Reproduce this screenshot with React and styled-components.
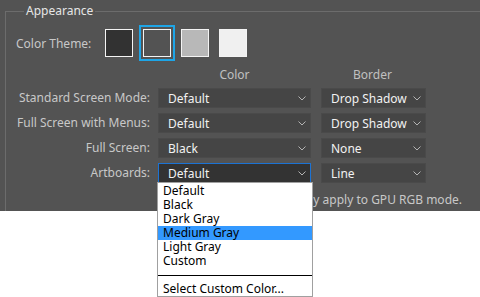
import styled, { createGlobalStyle } from 'styled-components';

const GlobalStyle = createGlobalStyle`
  html, body {
    margin: 0;
    padding: 0;
    background: #ffffff;
  }
  body {
    font-family: 'Noto Sans', 'Open Sans', sans-serif;
    font-size: 12px;
  }
`;

const THEMES = ['#323232', '#535353', '#b8b8b8', '#f0f0f0'];

const ROWS = [
  { label: 'Standard Screen Mode:', color: 'Default', border: 'Drop Shadow' },
  { label: 'Full Screen with Menus:', color: 'Default', border: 'Drop Shadow' },
  { label: 'Full Screen:', color: 'Black', border: 'None' },
  { label: 'Artboards:', color: 'Default', border: 'Line', open: true },
];

const OPTIONS = ['Default', 'Black', 'Dark Gray', 'Medium Gray', 'Light Gray', 'Custom'];

function Chevron() {
  return (
    <ChevronSvg width="8" height="5" viewBox="0 0 8 5">
      <polyline points="0.5,0.5 4,4 7.5,0.5" fill="none" stroke="#b4b4b4" strokeWidth="1" />
    </ChevronSvg>
  );
}

function Select({ value, width, active, children }) {
  return (
    <SelectBox $width={width} $active={active}>
      <SelectValue>{value}</SelectValue>
      <Chevron />
      {children}
    </SelectBox>
  );
}

export default function App() {
  return (
    <Page>
      <GlobalStyle />
      <Panel>
        <Group>
          <Legend>Appearance</Legend>

          <ThemeRow>
            <ThemeLabel>Color Theme:</ThemeLabel>
            <Swatches>
              {THEMES.map((c, i) => (
                <Swatch key={c} $color={c} $selected={i === 1} />
              ))}
            </Swatches>
          </ThemeRow>

          <ModeGrid>
            <span />
            <ColHead>Color</ColHead>
            <ColHead>Border</ColHead>
            {ROWS.map((row) => (
              <Row key={row.label} row={row} />
            ))}
          </ModeGrid>

          {/* left part of the note sits under the open menu */}
          <Note>
            <span>Note: Border settings only apply to GPU RGB mode.</span>
          </Note>
        </Group>
      </Panel>
    </Page>
  );
}

function Row({ row }) {
  return (
    <>
      <RowLabel>{row.label}</RowLabel>
      <Select value={row.color} width={153} active={row.open}>
        {row.open && (
          <Menu>
            {OPTIONS.map((o) => (
              <MenuItem key={o} $hl={o === 'Medium Gray'}>{o}</MenuItem>
            ))}
            <MenuRule />
            <MenuItem>Select Custom Color...</MenuItem>
          </Menu>
        )}
      </Select>
      <Select value={row.border} width={105} />
    </>
  );
}

const Page = styled.div`
  height: 297px;
  overflow: hidden;
  background: #ffffff;
`;

const Panel = styled.div`
  height: 211px;
  background: #535353;
  padding: 11px 0 0 5px;
  box-sizing: border-box;
`;

const Group = styled.div`
  height: 200px;
  box-sizing: border-box;
  border-top: 1px solid #6c6c6c;
  border-left: 1px solid #6c6c6c;
  padding-left: 10px;
`;

const Legend = styled.div`
  width: fit-content;
  margin: -9px 0 0 8px;
  padding: 0 2px;
  height: 16px;
  line-height: 16px;
  color: #e6e6e6;
  background: #535353;
`;

const ThemeRow = styled.div`
  display: flex;
  align-items: center;
  margin-top: 10px;
  height: 28px;
`;

const ThemeLabel = styled.span`
  width: 89px;
  color: #c8c8c8;
`;

const Swatches = styled.div`
  display: flex;
  gap: 10px;
`;

const Swatch = styled.div`
  width: 28px;
  height: 28px;
  box-sizing: border-box;
  background: ${({ $color }) => $color};
  border: 1px solid #f4f4f4;
  outline: ${({ $selected }) => ($selected ? '2px solid #1ea5e6' : 'none')};
  outline-offset: 2px;
`;

const ModeGrid = styled.div`
  display: grid;
  grid-template-columns: 134px 153px 105px;
  column-gap: 8px;
  row-gap: 5px;
  margin-top: 10px;
  align-items: center;
  & > :nth-child(3n) {
    margin-left: 2px;
  }
`;

const ColHead = styled.div`
  text-align: center;
  color: #c0c0c0;
  line-height: 16px;
`;

const RowLabel = styled.div`
  text-align: right;
  color: #c8c8c8;
  line-height: 20px;
  white-space: nowrap;
`;

const SelectBox = styled.div`
  position: relative;
  width: ${({ $width }) => $width}px;
  height: 20px;
  box-sizing: border-box;
  display: flex;
  align-items: center;
  padding: 0 4px 0 9px;
  background: ${({ $active }) => ($active ? '#333333' : '#454545')};
  border: 1px solid ${({ $active }) => ($active ? '#1c73d4' : '#4a4a4a')};
  color: #f2f2f2;
`;

const SelectValue = styled.span`
  flex: 1;
  white-space: nowrap;
`;

const ChevronSvg = styled.svg`
  display: block;
  flex-shrink: 0;
`;

const Menu = styled.div`
  position: absolute;
  top: 100%;
  left: -2px;
  width: 156px;
  box-sizing: border-box;
  background: #ffffff;
  border: 1px solid #a0a0a0;
  padding-top: 1px;
  z-index: 2;
`;

const MenuItem = styled.div`
  height: 14px;
  line-height: 14px;
  padding-left: 5px;
  color: #000000;
  background: ${({ $hl }) => ($hl ? '#3399ff' : 'transparent')};
  white-space: nowrap;
`;

const MenuRule = styled.div`
  height: 1px;
  background: #000000;
  margin: 7px 0 6px;
`;

const Note = styled.div`
  display: flex;
  justify-content: flex-end;
  overflow: hidden;
  margin: 9px 18px 0 297px;
  color: #c8c8c8;
  line-height: 16px;
  white-space: nowrap;

  & > span {
    flex-shrink: 0;
  }
`;
